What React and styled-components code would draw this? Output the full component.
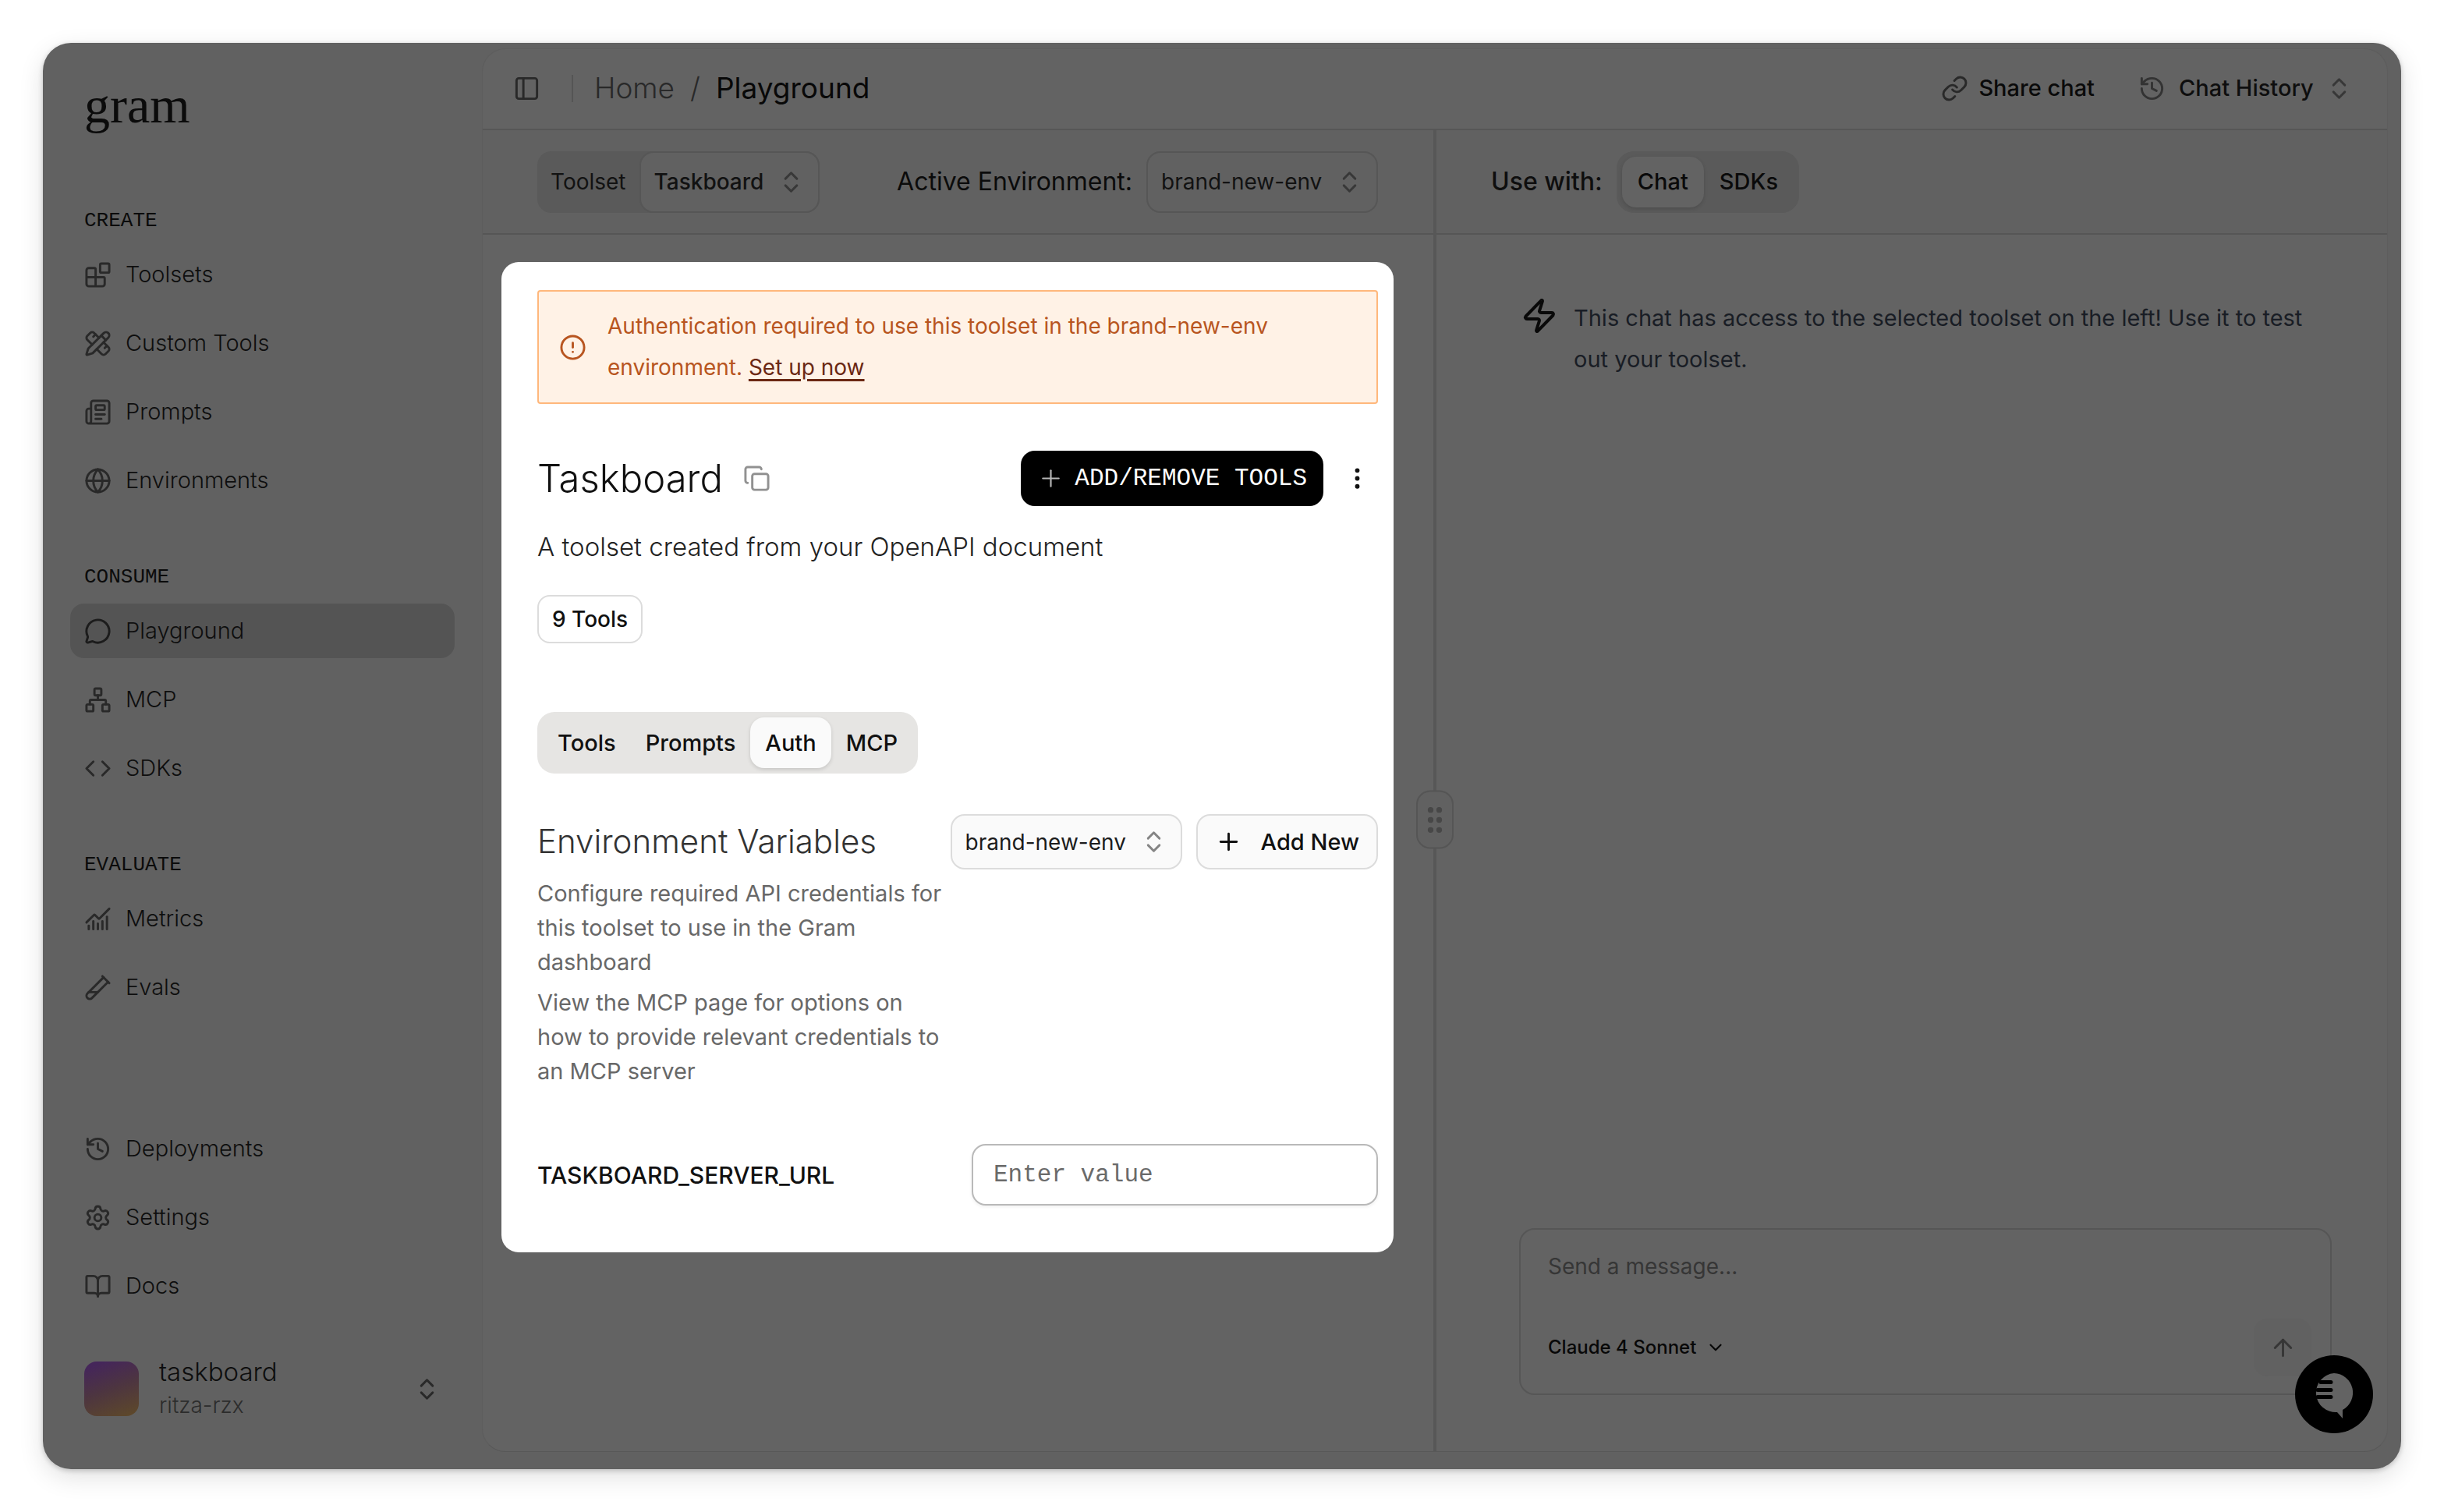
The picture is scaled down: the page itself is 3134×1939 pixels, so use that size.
import React from "react";
import styled, { createGlobalStyle } from "styled-components";
import {
  ArrowUp,
  Blocks,
  BookOpen,
  ChartNoAxesCombined,
  ChevronDown,
  ChevronsUpDown,
  CircleAlert,
  Code,
  Copy,
  EllipsisVertical,
  Globe,
  GripVertical,
  History,
  Link,
  MessageCircle,
  Network,
  Newspaper,
  PanelLeft,
  PencilRuler,
  Plus,
  Settings,
  TestTubeDiagonal,
  Zap,
} from "lucide-react";

const sans = `Inter, "Liberation Sans", sans-serif`;
const mono = `"Liberation Mono", monospace`;

const GlobalStyle = createGlobalStyle`
  *, *::before, *::after {
    box-sizing: border-box;
  }

  body {
    margin: 0;
    background: #fff;
    font-family: ${sans};
    font-size: 28px;
    line-height: 44px;
    color: #111;
  }

  h1, h2, p {
    margin: 0;
    font-weight: 300;
  }

  button, input, select, textarea {
    margin: 0;
    font: inherit;
    color: inherit;
  }

  svg {
    flex: none;
    display: block;
  }
`;

const Page = styled.div`
  min-height: 100vh;
  padding: 55px;
  display: flex;
`;

const Window = styled.div`
  flex: 1;
  display: flex;
  background: #616161;
  border-radius: 36px;
  box-shadow: 0 2px 6px rgba(0, 0, 0, 0.2), 0 10px 32px rgba(0, 0, 0, 0.12);
`;

/* ---------- sidebar ---------- */

const Sidebar = styled.aside`
  width: 563px;
  flex: none;
  padding: 44px 35px 60px;
  display: flex;
  flex-direction: column;
`;

const Logo = styled.a`
  padding-left: 18px;
  margin-bottom: 93px;
  font-family: "Liberation Serif", serif;
  font-size: 66px;
  line-height: 72px;
  color: #0b0b0b;
  text-decoration: none;
`;

const NavGroup = styled.nav`
  display: flex;
  flex-direction: column;
  gap: 18px;
  margin-bottom: ${(p) => (p.$last ? "54px" : "70px")};
  margin-top: ${(p) => (p.$last ? "auto" : "0")};
`;

const NavLabel = styled.div`
  padding: 2px 0 0 18px;
  margin-bottom: -2px;
  font-family: ${mono};
  font-size: 26px;
  line-height: 35px;
  color: #0b0b0b;
`;

const NavItem = styled.a`
  height: 70px;
  padding: 0 18px;
  display: flex;
  align-items: center;
  gap: 18px;
  border-radius: 18px;
  font-size: 29px;
  font-weight: 300;
  color: #0e0e0e;
  text-decoration: none;
  background: ${(p) => (p.$active ? "#545454" : "transparent")};

  svg {
    color: ${(p) => (p.$active ? "#1c1c1c" : "#292929")};
  }
`;

const TeamSwitcher = styled.button`
  border: none;
  background: none;
  padding: 0 18px;
  display: flex;
  align-items: center;
  gap: 26px;
  text-align: left;
  color: #0e0e0e;

  svg {
    margin-left: auto;
    color: #292929;
  }
`;

const Avatar = styled.span`
  width: 70px;
  height: 70px;
  border-radius: 16px;
  background: linear-gradient(160deg, #45265a 10%, #4d3540 50%, #5f4a28 100%);
`;

const TeamName = styled.span`
  display: block;
  font-size: 33px;
  font-weight: 300;
  line-height: 43px;
`;

const TeamSlug = styled.span`
  display: block;
  font-weight: 300;
  line-height: 43px;
  color: #2c2c2c;
`;

/* ---------- main ---------- */

const Main = styled.main`
  flex: 1;
  min-width: 0;
  margin: 7px 17px 22px 0;
  display: flex;
  flex-direction: column;
  background: #636363;
  border: 1px solid #5d5d5d;
  border-bottom-color: #585858;
  border-radius: 30px;
`;

const Header = styled.header`
  height: 104px;
  padding: 0 44px 2px 39px;
  display: flex;
  align-items: center;
  border-bottom: 2px solid #565656;
`;

const IconButton = styled.button`
  border: none;
  background: none;
  padding: 0;
  color: ${(p) => p.$color || "#292929"};
`;

const Separator = styled.span`
  width: 2px;
  height: 35px;
  margin: 0 27px 0 40px;
  background: #555;
`;

const Breadcrumb = styled.nav`
  display: flex;
  gap: 20px;
  font-size: 37px;
  font-weight: 300;
  color: #292929;

  a {
    color: inherit;
    text-decoration: none;
  }

  strong {
    font-weight: 400;
    color: #080808;
  }
`;

const HeaderActions = styled.div`
  margin-left: auto;
  display: flex;
  align-items: center;
  gap: 56px;
`;

const HeaderButton = styled.button`
  border: none;
  background: none;
  padding: 0;
  display: flex;
  align-items: center;
  gap: 13px;
  font-size: 29px;
  font-weight: 500;
  color: #0a0a0a;

  svg {
    color: #292929;
  }
`;

const HistoryPicker = styled.label`
  display: flex;
  align-items: center;
  gap: 17px;
  font-size: 29px;
  font-weight: 500;
  color: #0e0e0e;

  > svg {
    color: #333;
  }
`;

const Split = styled.div`
  flex: 1;
  display: flex;
`;

const Pane = styled.section`
  flex: 1 1 0;
  min-width: 0;
  display: flex;
  flex-direction: column;
`;

const Divider = styled.div`
  position: relative;
  width: 4px;
  background: #575757;
`;

const Handle = styled.button`
  position: absolute;
  top: 50%;
  left: 50%;
  margin-top: 37px;
  transform: translate(-50%, -50%);
  width: 48px;
  height: 75px;
  padding: 0;
  display: grid;
  place-items: center;
  background: #616161;
  border: 2px solid #555;
  border-radius: 18px;
  color: #474747;
`;

const Toolbar = styled.div`
  height: 134px;
  padding: 0 71px 0 70px;
  display: flex;
  align-items: center;
  background: #616161;
  border-bottom: 2px solid #565656;
`;

const ToolsetPicker = styled.div`
  display: flex;
  align-items: center;
  background: #5a5a5a;
  border-radius: 18px;
  color: #121212;

  > label {
    padding: 0 17px;
  }
`;

const Field = styled.div`
  margin-left: auto;
  display: flex;
  align-items: center;
  gap: 18px;

  > label {
    font-size: 32px;
    color: #0b0b0b;
  }
`;

const UseWith = styled.div`
  display: flex;
  align-items: center;
  gap: 18px;
  font-size: 32px;
  font-weight: 500;
  color: #0e0e0e;
`;

/* select and its arrows share one grid cell */
const SelectBox = styled.span`
  display: inline-grid;
  align-items: center;

  > select,
  > svg {
    grid-area: 1 / 1;
  }

  > svg {
    justify-self: end;
    margin-right: ${(p) => (p.$bare ? "0" : "19px")};
    color: ${(p) => (p.$light ? "#858585" : "#383838")};
    pointer-events: none;
  }
`;

const Select = styled.select`
  appearance: none;
  height: ${(p) => p.$height || 79}px;
  padding: 0 69px 0 17px;
  border: 2px solid ${(p) => (p.$light ? "#dcdcdc" : "#565656")};
  border-radius: 18px;
  background: ${(p) => (p.$light ? "#fafafa" : "#616161")};
  font-weight: ${(p) => p.$weight || 400};
  color: ${(p) => (p.$light ? "#1c1c1c" : "#121212")};
`;

const BareSelect = styled.select`
  appearance: none;
  border: none;
  background: none;
  padding: 0 ${(p) => p.$room}px 0 0;
`;

const Tabs = styled.div`
  align-self: flex-start;
  height: 79px;
  padding: 7px;
  display: flex;
  border-radius: 22px;
  background: ${(p) => (p.$dim ? "#5a5a5a" : "#e6e5e3")};
`;

const Tab = styled.button`
  border: none;
  padding: 0 ${(p) => (p.$dim ? 20 : 19)}px;
  border-radius: 18px;
  background: none;
  font-size: 29px;
  font-weight: 500;
  color: ${(p) => (p.$dim ? "#0a0a0a" : "#111")};

  &[aria-selected="true"] {
    background: ${(p) => (p.$dim ? "#636363" : "#fafafa")};
    box-shadow: 0 2px 5px rgba(0, 0, 0, 0.14);
  }
`;

/* ---------- toolset card ---------- */

const PaneBody = styled.div`
  padding: 35px 51px 0 24px;
`;

const Card = styled.div`
  padding: 36px 20px 60px 46px;
  display: flex;
  flex-direction: column;
  background: #fff;
  border-radius: 22px;
`;

const Alert = styled.div`
  padding: 18px 26px;
  display: flex;
  align-items: center;
  gap: 27px;
  border: 2px solid #ffb87c;
  border-radius: 4px;
  background: #fff2e6;
  color: #b85520;
  line-height: 53px;

  a {
    color: #6b2813;
    text-underline-offset: 5px;
    text-decoration-thickness: 3px;
  }
`;

const NoWrap = styled.span`
  white-space: nowrap;
`;

const TitleRow = styled.div`
  margin-top: 60px;
  padding-right: 9px;
  display: flex;
  align-items: center;
`;

const Title = styled.h1`
  margin-right: 26px;
  font-size: 49px;
  line-height: 60px;
`;

const AddTools = styled.button`
  height: 71px;
  margin-left: auto;
  margin-right: 26px;
  padding: 0 21px;
  display: flex;
  align-items: center;
  gap: 13px;
  border: none;
  border-radius: 18px;
  background: #000;
  color: #fff;
  font-family: ${mono};
  font-size: 31px;

  svg {
    color: #b5b5b5;
  }
`;

const Description = styled.p`
  margin-top: 30px;
  font-size: 33px;
  color: #222;
`;

const Badge = styled.span`
  align-self: flex-start;
  height: 62px;
  margin: 40px 0 88px;
  padding: 0 17px;
  display: flex;
  align-items: center;
  border: 2px solid #dcdcdc;
  border-radius: 16px;
  font-weight: 500;
`;

const EnvSection = styled.div`
  margin-top: 52px;
  display: flex;
  align-items: flex-start;
  gap: 8px;
`;

const EnvText = styled.div`
  flex: 1;
  min-width: 0;

  h2 {
    margin-bottom: 10px;
    font-size: 42px;
    line-height: 70px;
    color: #333;
  }

  p {
    font-size: 29px;
    font-weight: 400;
    color: #686868;
  }

  p + p {
    margin-top: 8px;
  }
`;

const EnvActions = styled.div`
  display: flex;
  gap: 18px;
`;

const AddNew = styled.button`
  height: 71px;
  padding: 0 22px;
  display: flex;
  align-items: center;
  gap: 24px;
  border: 2px solid #dcdcdc;
  border-radius: 18px;
  background: #fafafa;
  font-size: 29px;
  font-weight: 500;
`;

const VariableRow = styled.div`
  margin-top: 71px;
  display: flex;
  align-items: center;
  justify-content: space-between;
  font-size: 30px;
  font-weight: 500;
`;

const ValueInput = styled.input`
  width: 521px;
  height: 79px;
  padding: 0 26px;
  border: 2px solid #b9b9b9;
  border-radius: 18px;
  background: #fff;
  box-shadow: 0 2px 4px rgba(0, 0, 0, 0.06);
  font-family: ${mono};
  font-size: 31px;
  font-weight: 400;

  &::placeholder {
    color: #6a6a6a;
  }
`;

/* ---------- chat ---------- */

const ChatBody = styled.div`
  flex: 1;
  padding: 80px 71px 72px 106px;
  display: flex;
  flex-direction: column;
  justify-content: space-between;
`;

const Notice = styled.div`
  padding: 0 30px 0 2px;
  display: flex;
  align-items: flex-start;
  gap: 20px;
  color: #090909;

  p {
    font-size: 29px;
    font-weight: 400;
    line-height: 53px;
    color: #191d25;
  }
`;

const Composer = styled.form`
  padding: 25px 24px 22px 35px;
  display: flex;
  flex-direction: column;
  gap: 45px;
  border: 2px solid #565656;
  border-radius: 20px;
`;

const Message = styled.textarea`
  height: 44px;
  padding: 0;
  border: none;
  outline: none;
  resize: none;
  background: none;

  &::placeholder {
    color: #363636;
  }
`;

const ComposerFooter = styled.div`
  display: flex;
  align-items: center;
  justify-content: space-between;
  font-size: 24px;
  font-weight: 500;
  color: #080808;
`;

const SendButton = styled.button`
  width: 74px;
  height: 74px;
  padding: 0;
  display: grid;
  place-items: center;
  border: none;
  border-radius: 18px;
  background: #616161;
  color: #363636;
`;

const HelpButton = styled.button`
  position: fixed;
  right: 91px;
  bottom: 101px;
  width: 100px;
  height: 100px;
  padding: 0;
  border: none;
  border-radius: 50%;
  background: #000;
`;

const navGroups = [
  {
    label: "CREATE",
    items: [
      ["Toolsets", Blocks],
      ["Custom Tools", PencilRuler],
      ["Prompts", Newspaper],
      ["Environments", Globe],
    ],
  },
  {
    label: "CONSUME",
    items: [
      ["Playground", MessageCircle],
      ["MCP", Network],
      ["SDKs", Code],
    ],
  },
  {
    label: "EVALUATE",
    items: [
      ["Metrics", ChartNoAxesCombined],
      ["Evals", TestTubeDiagonal],
    ],
  },
  {
    items: [
      ["Deployments", History],
      ["Settings", Settings],
      ["Docs", BookOpen],
    ],
  },
];

function EnvSelect({ id, label, value, ...style }) {
  return (
    <SelectBox $light={style.$light}>
      <Select id={id} aria-label={label} defaultValue={value} {...style}>
        <option>{value}</option>
      </Select>
      <ChevronsUpDown size={35} />
    </SelectBox>
  );
}

function TabList({ tabs, active, dim }) {
  return (
    <Tabs role="tablist" $dim={dim}>
      {tabs.map((tab) => (
        <Tab key={tab} type="button" role="tab" aria-selected={tab === active} $dim={dim}>
          {tab}
        </Tab>
      ))}
    </Tabs>
  );
}

function SideNav() {
  return (
    <Sidebar>
      <Logo href="#home">gram</Logo>
      {navGroups.map(({ label, items }, i) => (
        <NavGroup key={i} $last={!label}>
          {label && <NavLabel>{label}</NavLabel>}
          {items.map(([name, Icon]) => (
            <NavItem key={name} href={`#${name}`} $active={name === "Playground"}>
              <Icon size={35} />
              {name}
            </NavItem>
          ))}
        </NavGroup>
      ))}
      <TeamSwitcher type="button">
        <Avatar />
        <span>
          <TeamName>taskboard</TeamName>
          <TeamSlug>ritza-rzx</TeamSlug>
        </span>
        <ChevronsUpDown size={35} />
      </TeamSwitcher>
    </Sidebar>
  );
}

function ToolsetCard() {
  return (
    <Card>
      <Alert role="alert">
        <CircleAlert size={35} />
        <div>
          <span>Authentication required to use this toolset in the brand-new-env</span>{" "}
          <NoWrap>
            <span>environment.</span> <a href="#setup">Set up now</a>
          </NoWrap>
        </div>
      </Alert>

      <TitleRow>
        <Title>Taskboard</Title>
        <IconButton type="button" aria-label="Copy" $color="#919191">
          <Copy size={35} />
        </IconButton>
        <AddTools type="button">
          <Plus size={35} strokeWidth={1.5} />
          ADD/REMOVE TOOLS
        </AddTools>
        <IconButton type="button" aria-label="More" $color="#111">
          <EllipsisVertical size={35} />
        </IconButton>
      </TitleRow>
      <Description>A toolset created from your OpenAPI document</Description>
      <Badge>9 Tools</Badge>

      <TabList tabs={["Tools", "Prompts", "Auth", "MCP"]} active="Auth" />

      <EnvSection>
        <EnvText>
          <h2>Environment Variables</h2>
          <p>Configure required API credentials for this toolset to use in the Gram dashboard</p>
          <p>View the MCP page for options on how to provide relevant credentials to an MCP server</p>
        </EnvText>
        <EnvActions>
          <EnvSelect label="Environment" value="brand-new-env" $light $height={71} />
          <AddNew type="button">
            <Plus size={35} />
            Add New
          </AddNew>
        </EnvActions>
      </EnvSection>

      <VariableRow>
        <label htmlFor="server-url">TASKBOARD_SERVER_URL</label>
        <ValueInput id="server-url" placeholder="Enter value" />
      </VariableRow>
    </Card>
  );
}

function Chat() {
  return (
    <ChatBody>
      <Notice>
        <Zap size={48} />
        <p>
          This chat has access to the selected toolset on the left! Use it to test out your toolset.
        </p>
      </Notice>
      <Composer>
        <Message aria-label="Message" placeholder="Send a message..." />
        <ComposerFooter>
          <SelectBox $bare>
            <BareSelect aria-label="Model" $room={37}>
              <option>Claude 4 Sonnet</option>
            </BareSelect>
            <ChevronDown size={26} color="#080808" />
          </SelectBox>
          <SendButton type="submit" aria-label="Send">
            <ArrowUp size={35} />
          </SendButton>
        </ComposerFooter>
      </Composer>
    </ChatBody>
  );
}

export default function App() {
  return (
    <Page>
      <GlobalStyle />
      <Window>
        <SideNav />
        <Main>
          <Header>
            <IconButton type="button" aria-label="Toggle sidebar">
              <PanelLeft size={35} />
            </IconButton>
            <Separator />
            <Breadcrumb>
              <a href="#home">Home</a>
              <span>/</span>
              <strong>Playground</strong>
            </Breadcrumb>
            <HeaderActions>
              <HeaderButton type="button">
                <Link size={35} />
                Share chat
              </HeaderButton>
              <HistoryPicker>
                <History size={35} />
                <SelectBox $bare>
                  <BareSelect aria-label="Chat history" $room={50}>
                    <option>Chat History</option>
                  </BareSelect>
                  <ChevronsUpDown size={35} />
                </SelectBox>
              </HistoryPicker>
            </HeaderActions>
          </Header>

          <Split>
            <Pane>
              <Toolbar>
                <ToolsetPicker>
                  <label htmlFor="toolset">Toolset</label>
                  <EnvSelect id="toolset" value="Taskboard" $weight={500} />
                </ToolsetPicker>
                <Field>
                  <label htmlFor="environment">Active Environment:</label>
                  <EnvSelect id="environment" value="brand-new-env" />
                </Field>
              </Toolbar>
              <PaneBody>
                <ToolsetCard />
              </PaneBody>
            </Pane>
            <Divider>
              <Handle type="button" aria-label="Resize panels">
                <GripVertical size={44} />
              </Handle>
            </Divider>
            <Pane>
              <Toolbar>
                <UseWith>
                  Use with:
                  <TabList tabs={["Chat", "SDKs"]} active="Chat" dim />
                </UseWith>
              </Toolbar>
              <Chat />
            </Pane>
          </Split>
        </Main>
      </Window>
      <HelpButton type="button" aria-label="Help">
        <svg width="100" height="100" viewBox="0 0 100 100">
          <path d="M50 23a25 25 0 1 0 4 50l7 8v-11A25 25 0 0 0 50 23z" fill="#636363" />
          <path
            d="M33 32h13a2.5 2.5 0 0 1 0 5h-13a2.5 2.5 0 0 1 0-5zM29 42h17a2.5 2.5 0 0 1 0 5h-17a2.5 2.5 0 0 1 0-5zM29 51h17a2.5 2.5 0 0 1 0 5h-17a2.5 2.5 0 0 1 0-5z"
            fill="#000"
          />
        </svg>
      </HelpButton>
    </Page>
  );
}
